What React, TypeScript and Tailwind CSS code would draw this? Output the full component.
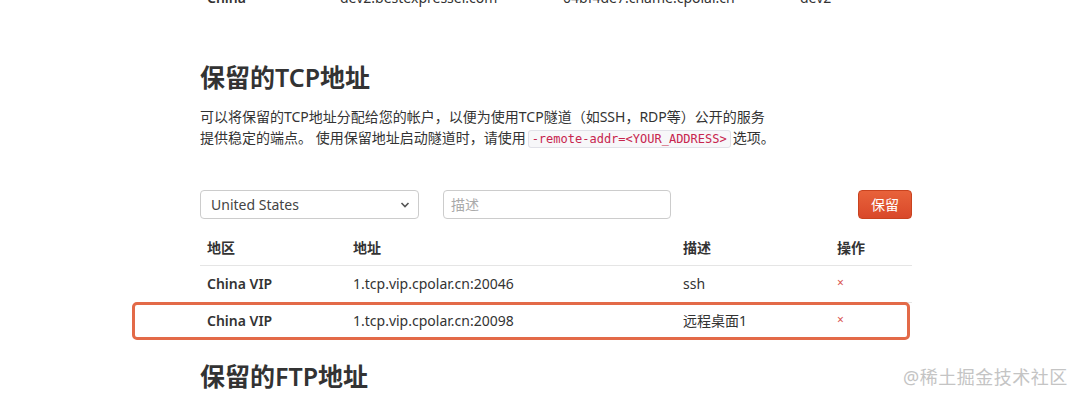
import React from "react";

const font = { fontFamily: '"Noto Sans", "Open Sans", "Noto Sans CJK SC", sans-serif' };

function Row({ region, addr, desc, bold = true }: { region: string; addr: string; desc: string; bold?: boolean }) {
  return (
    <div className="flex items-center h-[37px] pb-[2px] border-t border-[#e5e5e5] text-[14px] text-[#333]">
      <div className={`w-[145px] pl-[7px] ${bold ? "font-semibold" : ""}`}>{region}</div>
      <div className="w-[330px] pl-[8px]">{addr}</div>
      <div className="w-[154px] pl-[8px]">{desc}</div>
      <div className="pl-[8px] text-[#d9534f] text-[12px]">×</div>
    </div>
  );
}

export default function App() {
  return (
    <div className="relative w-[1074px] h-[395px] overflow-hidden bg-white" style={font}>
      {/* clipped top row */}
      <div className="flex items-center h-[20px] -mt-[13px] ml-[200px] text-[14px] text-[#333]">
        <div className="w-[140px] pl-[7px] font-semibold">China</div>
        <div className="w-[223px]">dev2.bestexpresser.com</div>
        <div className="w-[237px]">04bf4de7.cname.cpolar.cn</div>
        <div className="w-[65px]">dev2</div>
        <div className="text-[#d9534f] text-[12px]">×</div>
      </div>

      <div className="ml-[200px] w-[712px]">
        <h2 className="mt-[53px] text-[25px] leading-[34px] font-semibold text-[#333]">保留的TCP地址</h2>
        <p className="mt-[12px] text-[14px] leading-[21px] text-[#333]">
          可以将保留的TCP地址分配给您的帐户，以便为使用TCP隧道（如SSH，RDP等）公开的服务
          <br />
          提供稳定的端点。 使用保留地址启动隧道时，请使用
          <code
            className="mx-[2px] px-[3px] py-[1px] rounded-[3px] border border-[#e1e1e8] bg-[#f7f7f9] text-[#c7254e] text-[12px]"
            style={{ fontFamily: '"DejaVu Sans Mono", monospace' }}
          >
            -remote-addr=&lt;YOUR_ADDRESS&gt;
          </code>
          选项。
        </p>

        <div className="mt-[40px] flex items-center">
          <div className="relative w-[219px] h-[29px] border border-[#ccc] rounded-[4px] flex items-center pl-[10px] text-[14px] text-[#444]">
            United States
            <svg className="absolute right-[8px] top-[10px]" width="10" height="8" viewBox="0 0 10 8">
              <path d="M1.5 2 L5 5.5 L8.5 2" stroke="#555" strokeWidth="1.6" fill="none" />
            </svg>
          </div>
          <div className="ml-[24px] w-[228px] h-[29px] border border-[#ccc] rounded-[4px] flex items-center pl-[7px] text-[14px] text-[#aaa]">
            描述
          </div>
          <div className="ml-auto w-[54px] h-[29px] rounded-[4px] bg-gradient-to-b from-[#e8623a] to-[#d9482a] border border-[#c9431f] text-white text-[14px] flex items-center justify-center">
            保留
          </div>
        </div>

        <div className="mt-[10px]">
          <div className="flex items-center h-[36px] text-[14px] font-semibold text-[#333]">
            <div className="w-[145px] pl-[7px]">地区</div>
            <div className="w-[330px] pl-[8px]">地址</div>
            <div className="w-[154px] pl-[8px]">描述</div>
            <div className="pl-[8px]">操作</div>
          </div>
          <Row region="China VIP" addr="1.tcp.vip.cpolar.cn:20046" desc="ssh" />
          <Row region="China VIP" addr="1.tcp.vip.cpolar.cn:20098" desc="远程桌面1" />
        </div>

        <h2 className="mt-[20px] text-[25px] leading-[34px] font-semibold text-[#333]">保留的FTP地址</h2>
      </div>

      {/* highlight annotation */}
      <div className="absolute left-[132px] top-[302px] w-[778px] h-[38px] border-[3px] border-[#e36a48] rounded-[5px]" />

      {/* watermark */}
      <div className="absolute left-[903px] top-[364px] text-[18px] text-[#c4c4c4] tracking-[0.5px]">@稀土掘金技术社区</div>
    </div>
  );
}
